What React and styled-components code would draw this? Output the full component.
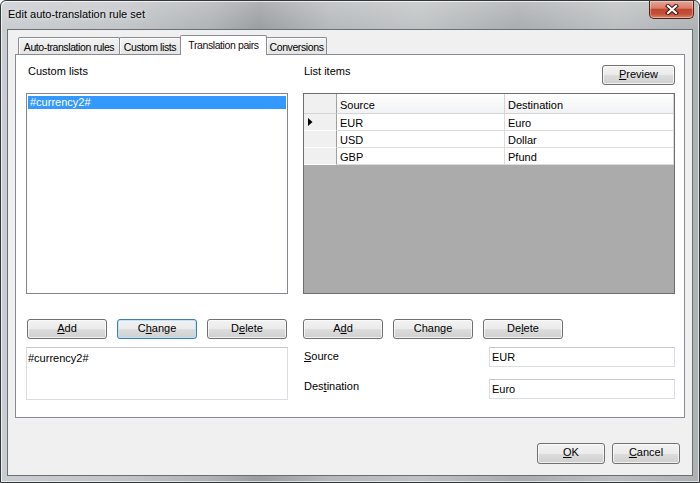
import React from 'react';
import styled, { createGlobalStyle } from 'styled-components';

const Global = createGlobalStyle`
  html, body { margin: 0; padding: 0; }
  body {
    width: 700px; height: 483px; overflow: hidden;
    font-family: "Liberation Sans", Arial, sans-serif;
    font-size: 11px; color: #000; background: #fff;
  }
  * { box-sizing: border-box; }
`;

const Window = styled.div`
  width: 700px;
  height: 483px;
  display: flex;
  flex-direction: column;
  border: 1px solid #34373a;
  border-radius: 6px 6px 0 0;
  padding: 0 6px 6px;
  background:
    linear-gradient(rgba(255,255,255,0.22), rgba(255,255,255,0) 30px),
    linear-gradient(90deg, #c9ccd0 0%, #c1c4c7 18%, #afb2b5 30%, #9a9da0 37%, #b5b8bb 47%, #bfc2c4 60%, #a9acaf 74%, #bcbfc1 88%, #aeb1b4 100%);
  box-shadow: inset 1px 1px 0 rgba(255,255,255,0.7), inset -1px -1px 0 rgba(255,255,255,0.6);
`;

const TitleBar = styled.div`
  height: 28px;
  display: flex;
  align-items: flex-start;
  justify-content: space-between;
`;

const Title = styled.div`
  margin: 7px 0 0 1px;
  font-size: 11px;
  line-height: 13px;
  color: #000;
  text-shadow: 0 0 5px rgba(255,255,255,0.9);
`;

const CloseButton = styled.div`
  width: 45px;
  height: 18px;
  margin-right: -1px;
  border: 1px solid #4e2219;
  border-top: none;
  border-radius: 0 0 5px 5px;
  background: linear-gradient(#e7a596 0%, #d87c69 42%, #c2462f 50%, #c75038 78%, #dc8874 100%);
  box-shadow: inset 0 0 0 1px rgba(255,255,255,0.35);
  display: flex;
  align-items: center;
  justify-content: center;
`;

const Client = styled.div`
  flex: 1;
  display: flex;
  flex-direction: column;
  border: 1px solid #6b6f73;
  background: #f0f0f0;
  padding-top: 5px;
`;

const TabControl = styled.div`
  margin: 0 7px;
  display: flex;
  flex-direction: column;
`;

const TabStrip = styled.div`
  height: 19px;
  display: flex;
  align-items: flex-end;
  padding-left: 3px;
`;

const Tab = styled.div`
  position: relative;
  width: ${p => p.$w}px;
  height: ${p => (p.$active ? 20 : 17)}px;
  margin-left: ${p => (p.$first ? 0 : -1)}px;
  margin-bottom: ${p => (p.$active ? -1 : 0)}px;
  z-index: ${p => (p.$active ? 2 : 1)};
  border: 1px solid #898c95;
  border-bottom: none;
  border-radius: 2px 2px 0 0;
  background: ${p => (p.$active ? '#ffffff' : 'linear-gradient(#f3f3f3, #e4e4e4)')};
  box-shadow: ${p => (p.$active ? 'none' : 'inset 1px 1px 0 rgba(255,255,255,0.8)')};
  padding-top: 3px;
  font-size: 10.5px;
  letter-spacing: -0.4px;
  line-height: 13px;
  text-align: center;
  white-space: nowrap;
  color: ${p => (p.$active ? '#1a0a0a' : '#000')};
`;

const Page = styled.div`
  height: 364px;
  border: 1px solid #898c95;
  background: #ffffff;
`;

const PageBody = styled.div`
  display: grid;
  grid-template-columns: 262px 372px;
  grid-template-rows: 20px 201px 37px 53px;
  column-gap: 15px;
  row-gap: 8px;
  padding: 10px 0 0 10px;
`;

const Label = styled.div`
  line-height: 13px;
  padding-left: ${p => p.$pl ?? 2}px;
  padding-top: ${p => p.$pt ?? 0}px;
  white-space: nowrap;
`;

const HeadRow = styled.div`
  display: flex;
  justify-content: space-between;
  align-items: flex-start;
`;

const Key = styled.span`
  text-decoration: underline;
  text-underline-offset: 1px;
`;

const Button = styled.button`
  width: ${p => p.$w ?? 80}px;
  height: ${p => p.$h ?? 20}px;
  padding: 0 0 2px;
  font-family: "Liberation Sans", Arial, sans-serif;
  font-size: 11px;
  line-height: 13px;
  color: #000;
  border: 1px solid ${p => (p.$focused ? '#3c7fb1' : '#707070')};
  border-radius: 3px;
  background: linear-gradient(#f2f2f2 0%, #ebebeb 50%, #dddddd 51%, #cfcfcf 100%);
  box-shadow: inset 0 0 0 1px ${p => (p.$focused ? '#bfe3f9' : 'rgba(255,255,255,0.7)')};
`;

const ButtonRow = styled.div`
  align-self: end;
  display: flex;
  gap: 10px;
  padding-left: ${p => p.$pl ?? 0}px;
`;

const ListBox = styled.div`
  border: 1px solid #828790;
  background: #fff;
  padding: 2px 1px;
`;

const ListItem = styled.div`
  height: 13px;
  line-height: 13px;
  padding-left: 2px;
  background: ${p => (p.$selected ? '#3399ff' : 'transparent')};
  color: ${p => (p.$selected ? '#fff' : '#000')};
`;

const Grid = styled.div`
  border: 1px solid #6e6e6e;
  background: #ababab;
  display: flex;
  flex-direction: column;
`;

const GridRow = styled.div`
  display: grid;
  grid-template-columns: 33px 168px 169px;
  height: ${p => (p.$header ? 20 : 17)}px;
  background: ${p => (p.$header ? 'linear-gradient(#ffffff, #f0f1f3)' : '#ffffff')};
`;

const HeaderCell = styled.div`
  border-right: 1px solid ${p => (p.$corner ? '#a0a0a0' : '#d5d5d5')};
  border-bottom: 1px solid #d5d5d5;
  padding: 5px 0 0 3px;
  line-height: 13px;
  background: ${p => (p.$corner ? '#f0f0f0' : 'transparent')};
`;

const RowHeader = styled.div`
  background: #f0f0f0;
  border-right: 1px solid #a0a0a0;
  border-bottom: 1px solid #ffffff;
  display: flex;
  align-items: center;
  padding-left: 4px;
`;

const Cell = styled.div`
  border-right: 1px solid #dcdcdc;
  border-bottom: 1px solid #dcdcdc;
  padding: 3px 0 0 3px;
  line-height: 13px;
`;

const TextArea = styled.div`
  border: 1px solid #dadde1;
  border-top-color: #c4c7cb;
  background: #fff;
  padding: 4px 1px;
  line-height: 13px;
`;

const Form = styled.div`
  display: grid;
  grid-template-columns: 186px 186px;
  grid-template-rows: 20px 20px;
  row-gap: 12px;
`;

const TextBox = styled.div`
  border: 1px solid #dadde1;
  border-top-color: #c4c7cb;
  background: #fff;
  padding: 3px 2px 0;
  line-height: 13px;
`;

const Footer = styled.div`
  display: flex;
  justify-content: flex-end;
  gap: 7px;
  padding: 25px 12px 0 0;
`;

const rows = [
  ['EUR', 'Euro'],
  ['USD', 'Dollar'],
  ['GBP', 'Pfund'],
];

const RowArrow = () => (
  <svg width="5" height="8" viewBox="0 0 5 8">
    <path d="M0 0 L4.5 4 L0 8 Z" fill="#000" />
  </svg>
);

export default function App() {
  return (
    <>
      <Global />
      <Window>
        <TitleBar>
          <Title>Edit auto-translation rule set</Title>
          <CloseButton>
            <svg width="14" height="11" viewBox="0 0 14 11">
              <path d="M3 2 L11 9 M11 2 L3 9" stroke="#3b1710" strokeWidth="4.2" strokeLinecap="square" fill="none" />
              <path d="M3 2 L11 9 M11 2 L3 9" stroke="#ffffff" strokeWidth="2.2" strokeLinecap="square" fill="none" />
            </svg>
          </CloseButton>
        </TitleBar>
        <Client>
          <TabControl>
            <TabStrip>
              <Tab $w={102} $first>Auto-translation rules</Tab>
              <Tab $w={62}>Custom lists</Tab>
              <Tab $w={87} $active>Translation pairs</Tab>
              <Tab $w={61}>Conversions</Tab>
            </TabStrip>
            <Page>
              <PageBody>
                <Label>Custom lists</Label>
                <HeadRow>
                  <Label $pl={1}>List items</Label>
                  <Button $w={73}><Key>P</Key>review</Button>
                </HeadRow>

                <ListBox>
                  <ListItem $selected>#currency2#</ListItem>
                </ListBox>
                <Grid>
                  <GridRow $header>
                    <HeaderCell $corner />
                    <HeaderCell>Source</HeaderCell>
                    <HeaderCell>Destination</HeaderCell>
                  </GridRow>
                  {rows.map(([s, d], i) => (
                    <GridRow key={s}>
                      <RowHeader>{i === 0 && <RowArrow />}</RowHeader>
                      <Cell>{s}</Cell>
                      <Cell>{d}</Cell>
                    </GridRow>
                  ))}
                </Grid>

                <ButtonRow $pl={1}>
                  <Button><Key>A</Key>dd</Button>
                  <Button $focused>C<Key>h</Key>ange</Button>
                  <Button>D<Key>e</Key>lete</Button>
                </ButtonRow>
                <ButtonRow>
                  <Button>A<Key>d</Key>d</Button>
                  <Button>Chan<Key>g</Key>e</Button>
                  <Button>De<Key>l</Key>ete</Button>
                </ButtonRow>

                <TextArea>#currency2#</TextArea>
                <Form>
                  <Label $pl={1} $pt={3}><Key>S</Key>ource</Label>
                  <TextBox>EUR</TextBox>
                  <Label $pl={1} $pt={1}>Des<Key>t</Key>ination</Label>
                  <TextBox>Euro</TextBox>
                </Form>
              </PageBody>
            </Page>
          </TabControl>
          <Footer>
            <Button $w={68} $h={21}><Key>O</Key>K</Button>
            <Button $w={68} $h={21}><Key>C</Key>ancel</Button>
          </Footer>
        </Client>
      </Window>
    </>
  );
}
